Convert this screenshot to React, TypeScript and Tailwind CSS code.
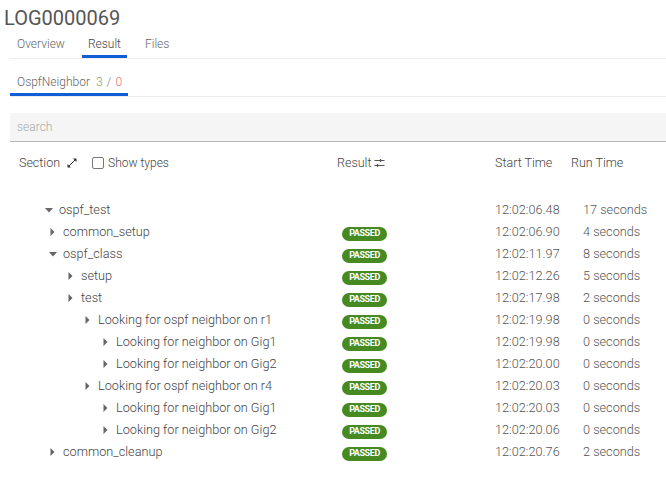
import React from "react";

type Row = {
  name: string;
  text: number; // x of text start
  caret: "down" | "right";
  badge: boolean;
  start: string;
  run: string;
};

const rows: Row[] = [
  { name: "ospf_test", text: 59, caret: "down", badge: false, start: "12:02:06.48", run: "17 seconds" },
  { name: "common_setup", text: 63, caret: "right", badge: true, start: "12:02:06.90", run: "4 seconds" },
  { name: "ospf_class", text: 63, caret: "down", badge: true, start: "12:02:11.97", run: "8 seconds" },
  { name: "setup", text: 81, caret: "right", badge: true, start: "12:02:12.26", run: "5 seconds" },
  { name: "test", text: 81, caret: "right", badge: true, start: "12:02:17.98", run: "2 seconds" },
  { name: "Looking for ospf neighbor on r1", text: 98, caret: "right", badge: true, start: "12:02:19.98", run: "0 seconds" },
  { name: "Looking for neighbor on Gig1", text: 116, caret: "right", badge: true, start: "12:02:19.98", run: "0 seconds" },
  { name: "Looking for neighbor on Gig2", text: 116, caret: "right", badge: true, start: "12:02:20.00", run: "0 seconds" },
  { name: "Looking for ospf neighbor on r4", text: 98, caret: "right", badge: true, start: "12:02:20.03", run: "0 seconds" },
  { name: "Looking for neighbor on Gig1", text: 116, caret: "right", badge: true, start: "12:02:20.03", run: "0 seconds" },
  { name: "Looking for neighbor on Gig2", text: 116, caret: "right", badge: true, start: "12:02:20.06", run: "0 seconds" },
  { name: "common_cleanup", text: 63, caret: "right", badge: true, start: "12:02:20.76", run: "2 seconds" },
];

function Caret({ dir }: { dir: "down" | "right" }) {
  if (dir === "down") {
    return (
      <svg width="8" height="5" viewBox="0 0 8 5" className="shrink-0">
        <path d="M0 0 L8 0 L4 4.5 Z" fill="#666" />
      </svg>
    );
  }
  return (
    <svg width="5" height="8" viewBox="0 0 5 8" className="shrink-0">
      <path d="M0.5 0 L4.5 4 L0.5 8 Z" fill="#666" />
    </svg>
  );
}

function Badge() {
  return (
    <span className="inline-flex h-[14px] w-[45px] items-center justify-center rounded-full bg-[#468a21] text-[9px] font-bold leading-none tracking-[-0.4px] text-white">
      PASSED
    </span>
  );
}

export default function App() {
  return (
    <div className="min-h-[480px] w-[666px] bg-white font-['Roboto',sans-serif] font-light text-[#444]">
      <div className="pl-[4px] pt-[6px] text-[20px] font-normal leading-[24px] text-[#555]">LOG0000069</div>

      {/* top tabs */}
      <div className="ml-[10px] mt-[1px] flex h-[28px] items-stretch border-b border-[#ececec] pb-[2px] text-[12px] text-[#666]">
        <div className="flex items-center px-[7px]">Overview</div>
        <div className="relative ml-[10px] flex items-center px-[6px] text-[#444]">
          Result
          <div className="absolute bottom-[-2px] left-0 right-0 h-[3px] bg-[#0f5ed6]" />
        </div>
        <div className="ml-[12px] flex items-center px-[6px]">Files</div>
      </div>

      {/* sub tabs */}
      <div className="ml-[10px] mt-[10px] flex h-[28px] items-stretch border-b border-[#ececec] pb-[2px] text-[12px]">
        <div className="relative flex items-center pl-[7px] pr-[6px] text-[#666]">
          OspfNeighbor<span className="ml-[6px] text-[#7fa36b]">3</span>
          <span className="mx-[4px] text-[#888]">/</span>
          <span className="text-[#e57373]">0</span>
          <div className="absolute bottom-[-2px] left-0 right-0 h-[3px] bg-[#0f5ed6]" />
        </div>
      </div>

      {/* search */}
      <div className="ml-[10px] mt-[16px] flex h-[29px] items-center border-b border-[#b8b8b8] bg-[#f5f5f5] pl-[7px] text-[12px] text-[#aaa]">
        search
      </div>

      {/* header */}
      <div className="ml-[10px] mt-[9px] grid h-[24px] grid-cols-[327px_158px_76px_1fr] items-center text-[12.5px] text-[#444]">
        <div className="flex items-center pl-[9px]">
          <span>Section</span>
          <svg width="12" height="12" viewBox="0 0 12 12" className="ml-[6px]">
            <path d="M2.5 9.5 L9.5 2.5" stroke="#333" strokeWidth="1" />
            <path d="M1.5 7 L1.5 10.5 L5 10.5 Z" fill="#333" />
            <path d="M7 1.5 L10.5 1.5 L10.5 5 Z" fill="#333" />
          </svg>
          <span className="ml-[14px] inline-block h-[12px] w-[12px] rounded-[2px] border border-[#777] bg-white" />
          <span className="ml-[4px] text-[12px]">Show types</span>
        </div>
        <div className="flex items-center">
          <span>Result</span>
          <svg width="11" height="10" viewBox="0 0 11 10" className="ml-[3px]">
            <path d="M0.5 2.5 H10.5 M0.5 7.5 H10.5" stroke="#555" strokeWidth="1" />
            <path d="M6.5 1 V4 M3.5 6 V9" stroke="#555" strokeWidth="1.3" />
          </svg>
        </div>
        <div>Start Time</div>
        <div>Run Time</div>
      </div>

      {/* rows */}
      <div className="ml-[10px] mt-[24px]">
        {rows.map((r, i) => (
          <div key={i} className="grid h-[22px] grid-cols-[327px_158px_88px_1fr] items-center text-[12.7px] text-[#444]">
            <div className="relative flex h-full items-center">
              <span
                className="absolute flex items-center"
                style={{ left: r.text - 10 - (r.caret === "down" ? 14 : 13) }}
              >
                <Caret dir={r.caret} />
              </span>
              <span style={{ paddingLeft: r.text - 10 }}>{r.name}</span>
            </div>
            <div className="pl-[5px]">{r.badge ? <Badge /> : null}</div>
            <div className="text-[#555]">{r.start}</div>
            <div className="text-[#555]">{r.run}</div>
          </div>
        ))}
      </div>
    </div>
  );
}
